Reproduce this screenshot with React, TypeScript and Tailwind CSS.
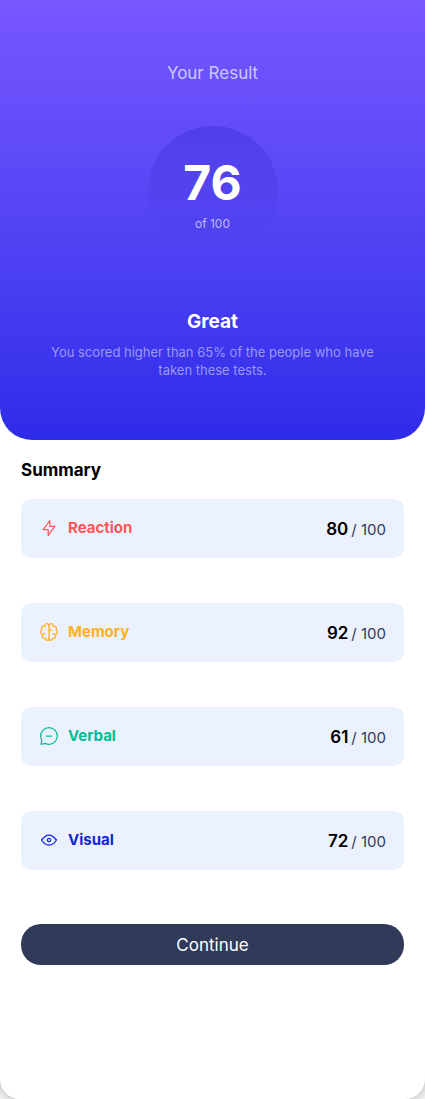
import type { ReactNode } from "react";

type Result = {
  label: string;
  score: number;
  color: string;
  icon: ReactNode;
};

const results: Result[] = [
  {
    label: "Reaction",
    score: 80,
    color: "text-[#ff5757]",
    icon: <path d="M10.833 8.333V2.5l-6.666 9.167h5V17.5l6.666-9.167h-5Z" />,
  },
  {
    label: "Memory",
    score: 92,
    color: "text-[#ffb01f]",
    icon: (
      <>
        <path d="M5.833 11.667a2.5 2.5 0 1 0 .834 4.858" />
        <path d="M3.553 13.004a3.333 3.333 0 0 1-.728-5.53m.025-.067a2.083 2.083 0 0 1 2.983-2.824m.199.054A2.083 2.083 0 1 1 10 3.75v12.917a1.667 1.667 0 0 1-3.333 0M10 5.833a2.5 2.5 0 0 0 2.5 2.5m1.667 3.334a2.5 2.5 0 1 1-.834 4.858" />
        <path d="M16.447 13.004a3.334 3.334 0 0 0 .728-5.53m-.025-.067a2.083 2.083 0 0 0-2.983-2.824M10 3.75a2.085 2.085 0 0 1 2.538-2.033 2.084 2.084 0 0 1 1.43 2.92m-.635 12.03a1.667 1.667 0 0 1-3.333 0" />
      </>
    ),
  },
  {
    label: "Verbal",
    score: 61,
    color: "text-[#00bd91]",
    icon: (
      <path d="M7.5 10h5M10 18.333A8.333 8.333 0 1 0 1.667 10c0 1.518.406 2.942 1.115 4.167l-.699 4.083 4.084-.833A8.3 8.3 0 0 0 10 18.333Z" />
    ),
  },
  {
    label: "Visual",
    score: 72,
    color: "text-[#1125d4]",
    icon: (
      <>
        <path d="M10 11.667a1.667 1.667 0 1 0 0-3.334 1.667 1.667 0 0 0 0 3.334Z" />
        <path d="M17.5 10c-1.574 2.492-4.402 5-7.5 5s-5.926-2.508-7.5-5C4.416 7.632 6.66 5 10 5s5.584 2.632 7.5 5Z" />
      </>
    ),
  },
];

function ResultRow({ label, score, color, icon }: Result) {
  return (
    <li className="flex items-start justify-between rounded-[10px] bg-[#ebf1ff] px-[18px] pt-4 pb-3.5">
      <div className={`flex items-center gap-[9px] ${color}`}>
        <svg
          className="size-5"
          viewBox="0 0 20 20"
          fill="none"
          stroke="currentColor"
          strokeWidth="1.25"
          strokeLinecap="round"
          strokeLinejoin="round"
          aria-hidden="true"
        >
          {icon}
        </svg>
        <h3 className="text-[15px] leading-[26px] font-bold">{label}</h3>
      </div>
      <p className="flex items-baseline gap-[3px] leading-[29px]">
        <strong className="text-[17px] leading-[29px] font-semibold text-black">{score}</strong>
        <span className="text-[15px] text-[#303b5a]">/ 100</span>
      </p>
    </li>
  );
}

export default function App() {
  return (
    <main className="flex min-h-screen flex-col rounded-b-[20px] bg-white font-['Inter','Liberation_Sans',sans-serif] shadow-[0_0_15px_rgba(0,0,0,0.4)]">
      <section className="flex flex-col items-center rounded-b-[32px] bg-linear-to-b from-[#7857ff] to-[#2e2be9] px-10 pt-[60px] pb-[61px] text-center">
        <h1 className="text-[17px] leading-[26px] text-[#cac9ff]">Your Result</h1>
        <div className="mt-10 flex size-[130px] flex-col items-center rounded-full bg-linear-to-b from-[#4e3fe8] to-[#4b3ff3]/0 pt-[26px]">
          <strong className="text-5xl leading-[62px] font-bold text-white">76</strong>
          <span className="text-xs leading-5 text-[#bdbaff]">of 100</span>
        </div>
        <h2 className="mt-[52px] text-[19px] leading-[27px] font-bold text-white">Great</h2>
        <p className="mt-2 text-[13px] leading-[18px] text-[#9b98f7]">
          You scored higher than 65% of the people who have taken these tests.
        </p>
      </section>
      <section className="flex flex-col px-[21px] pt-4 pb-10">
        <h2 className="text-[17px] leading-7 font-bold text-black">Summary</h2>
        <ul className="mt-[15px] flex flex-col gap-[45px]">
          {results.map((result) => (
            <ResultRow key={result.label} {...result} />
          ))}
        </ul>
        <button
          type="button"
          className="mt-[54px] rounded-[20px] bg-[#303b5a] pt-2 pb-1.5 text-[17px] leading-[27px] text-white"
        >
          Continue
        </button>
      </section>
    </main>
  );
}
